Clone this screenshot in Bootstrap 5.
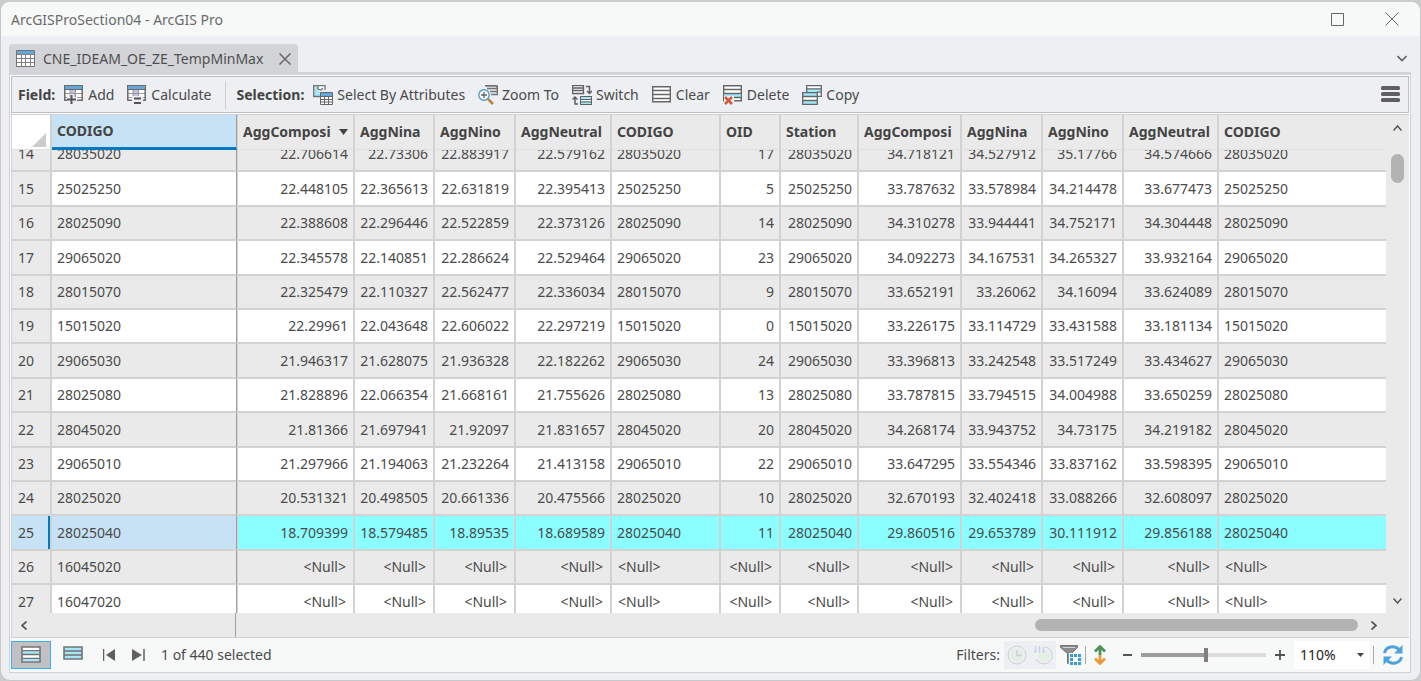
<!DOCTYPE html>
<html lang="en">
<head>
<meta charset="utf-8">
<meta name="viewport" content="width=device-width, initial-scale=1">
<title>ArcGISProSection04 - ArcGIS Pro</title>
<link rel="stylesheet" href="https://cdn.jsdelivr.net/npm/bootstrap@5.3.0/dist/css/bootstrap.min.css">
<style>
:root{--ink:#4a4a4a;--line:#cbcbcb;--chrome:#eeeff2;--pale:#f7f9f8;--gray:#eaeaea}
body{background:#cbcccc;color:var(--ink);font:14px/20px "Noto Sans","Open Sans",sans-serif;padding-top:2px}
.win{height:calc(100vh - 2px);background:var(--chrome);border:1px solid #c6c7c9;border-top:0;border-radius:9px 9px 10px 10px;overflow:hidden}
.title-bar{height:34px;background:var(--pale);padding:0 21px 0 10px;color:#6b6b6b}
.title-text{padding-top:2px}
.title-bar,.tab-strip,.tool-bar,.h-scroll,.v-scroll,.status-bar{flex-shrink:0}
.title-bar svg,.plain-btn svg{display:block}
.caption-btns{gap:41px}
.plain-btn{border:0;background:none;padding:0;color:inherit;white-space:nowrap;display:flex;align-items:center;gap:4px;line-height:20px}
.tab-strip{padding:8px 13px 0 8px;height:36px}
.doc-tab{background:#d3d4d8;border-radius:3px 3px 0 0;height:28px;padding:1px 7px 0;gap:8px;color:#4f4f4f}
.panel{margin:0 9px 7px 8px;border:1px solid #cfd0d3;border-top:3px solid #d3d4d8;background:#fff;min-height:0}
.tool-bar{margin:1px;height:37px;border:1px solid #bcbdc1;background:var(--chrome);padding:0 8px 0 6px}
.tools{gap:13px}
.tool-set{gap:9px}
.tools strong{color:#444}
.tool-sep{width:1px;height:28px;background:#cdced2;margin:0 -3px 0 1px}
.grid-zone{margin:0 1px;border:1px solid #d0d0d0;border-right:0;background:var(--gray);min-height:0}
.grid-view{overflow:hidden;min-height:0;min-width:0;height:100%}
.attr{border-collapse:separate;border-spacing:0;table-layout:fixed;width:100%}
.attr th,.attr td{padding:0 5px;border-right:2px solid #d2d2d2;border-bottom:2px solid #d2d2d2;white-space:nowrap;overflow:hidden;height:34px}
.attr tr>:last-child{border-right:0}
.attr tbody tr:nth-child(5n+2)>*,.attr tbody tr:nth-child(5n+4)>*{height:35px}
.attr thead th{position:sticky;top:0;height:35px;background:var(--gray);border-bottom:1px solid #e0e0e0;font-weight:700;color:#444}
.attr tbody th{background:var(--gray);font-weight:400;padding-left:6px}
.attr tbody tr:nth-child(even) td{background:#fff}
.attr tbody tr:nth-child(odd) td{background:var(--gray)}
.attr .n{text-align:right}
.attr .nil{padding:0 7px 0 6px}
.attr .pin{border-right-color:#a0a0a0;border-right-width:1px}
.attr .pin+*{border-left:1px solid #d2d2d2}
.attr thead .pin{background:#c8e2f5;border-bottom:3px solid #007ac2}
.attr thead .corner{background:#fff;padding:0}
.attr tbody tr.picked td{background:#8bffff}
.attr tbody tr.picked th,.attr tbody tr.picked .pin{background:#c8e2f5}
.attr tbody tr.picked th{box-shadow:inset -2px 0 #007ac2}
.v-scroll{width:23px;padding:10px 0 9px}
.v-thumb{width:13px;height:29px;border-radius:7px;background:#b3b3b3;margin-top:23px}
.h-scroll{height:24px}
.h-left{width:224px;border-right:1px solid #a0a0a0;padding-left:9px}
.h-right{gap:13px;padding-right:32px}
.h-thumb{width:323px;height:12px;border-radius:6px;background:#b3b3b3}
.status-bar{height:34px;background:var(--pale);padding:0 6px 0 1px}
.mode-btn{width:40px;height:28px;justify-content:center}
.mode-btn.on{background:#c0c1c5;border:1px solid #3daeee}
.off{background:var(--chrome);width:26px;height:28px;justify-content:center}
.bar-sep{width:1px;height:18px;background:#aaa}
.zoom-range{appearance:none;width:125px;height:14px;background:linear-gradient(90deg,#9c9c9c 52%,#dcdcdc 52%) center/100% 4px no-repeat}
.zoom-range::-webkit-slider-thumb{appearance:none;width:4px;height:14px;background:#808080}
.zoom-pick{width:75px;height:28px;border:0;background:#fff;color:#222;padding:0 0 0 6px;appearance:none;font-size:14px}
.caret-mark{right:5px;top:12px;pointer-events:none}
</style>
</head>
<body>
<svg width="0" height="0" class="position-absolute"><defs>
<g id="tbl"><path d="M.5 .5h18v16H.5z" fill="#fff" stroke="#737373"/><path d="M1 1h17v3H1z" fill="#62a9da"/><path d="M.5 4.500h18M1 8.500h17M1 12.500h17M5.500 5v12M9.500 5v12M14.500 5v12" stroke="#808080" fill="none"/></g>
<g id="fld"><path d="M.7 1h17.600v14H.7z" fill="#fff"/><path d="M6 5h5v8H6z" fill="#c9bfe0"/><path d="M1 8.500h17M1 12.500h17M6 5v10M11.500 5v10" stroke="#999" fill="none"/><path d="M.8 1v14.200h17.400V1" stroke="#6a6a6a" stroke-width="1.500" fill="none"/><path d="M0 0h19v5H0z" fill="#6a6a6a"/><path d="M1 1h17v3H1z" fill="#62a9da"/></g>
</defs></svg>
<main class="win d-flex flex-column">
<header class="title-bar d-flex align-items-center justify-content-between">
<span class="title-text">ArcGISProSection04 - ArcGIS Pro</span>
<div class="caption-btns d-flex align-items-center">
<button class="plain-btn" aria-label="Maximize"><svg width="13" height="13" fill="none" stroke="#666"><path d="M.5 .5h12v12H.5z"/></svg></button>
<button class="plain-btn" aria-label="Close"><svg width="14" height="14" stroke="#666"><path d="M.5 .5l13 13M13.500 .5l-13 13"/></svg></button>
</div></header>
<div class="tab-strip d-flex align-items-center justify-content-between">
<div class="doc-tab d-flex align-items-center"><svg width="19" height="17"><use href="#tbl"/></svg><span>CNE_IDEAM_OE_ZE_TempMinMax</span>
<button class="plain-btn ms-2" aria-label="Close tab"><svg width="12" height="12" stroke="#666" stroke-width="1.500"><path d="M.5 .5l11 11M11.500 .5l-11 11"/></svg></button></div>
<button class="plain-btn" aria-label="Views list"><svg width="10" height="7" fill="none" stroke="#666" stroke-width="1.700"><path d="M.5 1l4.500 4.500L9.500 1"/></svg></button>
</div>
<section class="panel d-flex flex-column flex-grow-1">
<div class="tool-bar d-flex align-items-center justify-content-between">
<div class="tools d-flex align-items-center">
<div class="tool-set d-flex align-items-center"><strong>Field:</strong>
<button class="plain-btn"><svg width="20" height="20"><use href="#fld"/><path d="M3 12h3V9h4v3h3v5h-3v3H5v-3H3z" fill="#eeeff2"/><path d="M7.500 10v9M3 14.500h9" stroke="#555" stroke-width="2"/></svg>Add</button></div>
<button class="plain-btn"><svg width="20" height="20"><use href="#fld"/><path d="M5 11h11v9H5z" fill="#eeeff2"/><path d="M7 13.500h7M7 18h7" stroke="#555" stroke-width="2"/></svg>Calculate</button>
<span class="tool-sep"></span>
<div class="tool-set d-flex align-items-center"><strong>Selection:</strong>
<button class="plain-btn"><svg width="20" height="20"><path d="M.7 .7h11.300v4H9L7 7v4.500H.7z" fill="#fff"/><path d="M1 1h4v3l2 3v4H1z" fill="#a5e6f8"/><path d="M7 11.500H.7V.7h11.300V5M5 1v3l3 1 2-2" fill="none" stroke="#737373" stroke-width="1.300"/><path d="M7.500 7.500h12v12h-12z" fill="#fff" stroke="#666"/><path d="M8 8h11v3H8z" fill="#62a9da"/><path d="M8 11.500h11M8 14.500h11M8 17h11M11.500 11v9M15.500 11v9" stroke="#666"/></svg>Select By Attributes</button></div>
<button class="plain-btn"><svg width="20" height="20" fill="none"><path d="M7 .7h12M19.300 .5v9.500M8 1h11v2.500M9 3.500h10M12 6.500h7M13 9.500h7" stroke="#737373" stroke-width="1.400"/><circle cx="6" cy="10" r="5.200" stroke="#4c9ccd" stroke-width="1.400" fill="#f5fbff"/><path d="M6 7v6M3 10h6" stroke="#666" stroke-width="1.300"/><path d="M10 14l5 5" stroke="#b9843f" stroke-width="2.500"/></svg>Zoom To</button>
<button class="plain-btn"><svg width="20" height="20" fill="none" stroke="#606060"><path d="M.5 .5h11v8H.5z" fill="#fff"/><path d="M.5 .5h11v8H.5zM.5 3h11M.5 5.500h11" stroke-width="1.300"/><path d="M8.500 11.500h11v8h-11z" fill="#fff"/><path d="M9 12h10v2H9zM9 16h10v3H9z" fill="#a5e6f8" stroke="none"/><path d="M8.500 11.500h11v8h-11zM8.500 14.500h11M8.500 17h11"/><path d="M14 1.500h3.500v7M15 6l2.500 2.500L20 6M6 19H3v-7M.5 14.500L3 12l2.500 2.500" stroke-width="1.500"/></svg>Switch</button>
<button class="plain-btn"><svg width="20" height="20"><path d="M.7 1.700h17.600v15H.7z" fill="#fff" stroke="#666" stroke-width="1.400"/><path d="M1 5.500h17M1 9.500h17M1 13.500h17" stroke="#666" stroke-width="1.300"/></svg>Clear</button>
<button class="plain-btn"><svg width="20" height="20"><path d="M.7 .7h17.600v15H.7z" fill="#fff" stroke="#666" stroke-width="1.400"/><path d="M1 9h17v3H1z" fill="#a5e6f8"/><path d="M1 4.500h17M1 8.500h17M1 12.500h17" stroke="#666" stroke-width="1.300"/><path d="M1 11h10v9H1z" fill="#eeeff2"/><path d="M2 12l7 7M9 12l-7 7" stroke="#cf5c3c" stroke-width="2.600"/></svg>Delete</button>
<button class="plain-btn"><svg width="20" height="20"><path d="M4.500 .5h15v11h-15z" fill="#fff"/><path d="M5 4h14v3H5z" fill="#a5e6f8"/><path d="M4.700 7V.7h14.600v10.600H16M5 3.800h14M15 7.200h4" fill="none" stroke="#666" stroke-width="1.300"/><path d="M.7 7.700h14.600v11.600H.7z" fill="#a5e6f8"/><path d="M1 12h14v3H1z" fill="#fff"/><path d="M.7 7.700h14.600v11.600H.7zM1 11.500h14M1 15.500h14" fill="none" stroke="#666" stroke-width="1.300"/></svg>Copy</button>
</div>
<button class="plain-btn" aria-label="Menu"><svg width="19" height="18" fill="#606060"><rect width="19" height="4" rx="1.500"/><rect y="6" width="19" height="4" rx="1.500"/><rect y="12" width="19" height="4" rx="1.500"/></svg></button>
</div>
<div class="grid-zone d-flex flex-column flex-grow-1">
<div class="d-flex flex-grow-1" style="min-height:0">
<div class="grid-view flex-grow-1" id="view"><table class="attr"><colgroup id="cols"></colgroup><thead><tr id="head"></tr></thead><tbody id="rows"></tbody></table></div>
<div class="v-scroll d-flex flex-column align-items-center justify-content-between">
<div class="d-flex flex-column align-items-center"><button class="plain-btn" aria-label="Scroll up"><svg width="9" height="6" fill="none" stroke="#555" stroke-width="1.500"><path d="M.5 5.500l4-4.500 4 4.500"/></svg></button><div class="v-thumb"></div></div>
<button class="plain-btn" aria-label="Scroll down"><svg width="9" height="6" fill="none" stroke="#555" stroke-width="1.500"><path d="M.5 .5l4 4.500 4-4.500"/></svg></button>
</div></div>
<div class="h-scroll d-flex">
<div class="h-left d-flex align-items-center"><button class="plain-btn" aria-label="Scroll left"><svg width="6" height="9" fill="none" stroke="#555" stroke-width="1.700"><path d="M5.500 .5l-4.500 4 4.500 4"/></svg></button></div>
<div class="h-right flex-grow-1 d-flex align-items-center justify-content-end"><div class="h-thumb"></div><button class="plain-btn" aria-label="Scroll right"><svg width="6" height="9" fill="none" stroke="#555" stroke-width="1.700"><path d="M.5 .5l4.500 4-4.500 4"/></svg></button></div>
</div></div>
<footer class="status-bar d-flex align-items-center justify-content-between">
<div class="d-flex align-items-center">
<button class="plain-btn mode-btn on" aria-label="Show all records"><svg width="20" height="18"><path d="M1 1h18v15H1z" fill="#fff" stroke="#737373" stroke-width="1.600"/><path d="M2 5h16v3H2zM2 13h16v2H2z" fill="#a5e6f8"/><path d="M1 4.700h18M1 8.500h18M1 12.300h18" stroke="#737373" stroke-width="1.300"/></svg></button>
<button class="plain-btn ms-2 me-3 ps-1" aria-label="Show selected records"><svg width="20" height="18"><path d="M1 1h18v12H1z" fill="#a5e6f8" stroke="#737373" stroke-width="1.600"/><path d="M1 5h18M1 9h18" stroke="#737373" stroke-width="1.500"/></svg></button>
<button class="plain-btn ms-1 me-3" aria-label="First record"><svg width="13" height="12"><path d="M.5 0v12" stroke="#606060" stroke-width="1.500"/><path d="M12 0v12L3 6z" fill="#606060"/></svg></button>
<button class="plain-btn me-3" aria-label="Last record"><svg width="13" height="12"><path d="M12 0v12" stroke="#606060" stroke-width="1.500"/><path d="M0 0v12l10-6z" fill="#606060"/></svg></button>
<span>1 of 440 selected</span></div>
<div class="d-flex align-items-center"><span class="me-1">Filters:</span>
<button class="plain-btn off" disabled aria-label="Time filter"><svg width="20" height="20" fill="none" stroke="#c9cfd2"><circle cx="10" cy="10" r="9"/><circle cx="10" cy="10" r="6.500" fill="#e3eee7" stroke="none"/><path d="M10 5v5.500h5" stroke-width="1.500"/></svg></button>
<button class="plain-btn off" disabled aria-label="Range filter"><svg width="20" height="20" fill="none" stroke="#c9cfd2"><path d="M12 2a8.500 8.500 0 1 1-9 12"/><circle cx="11" cy="11" r="6" fill="#e3eee7" stroke="none"/><path d="M2.500 1v7M6.500 1v7M10.500 1v7M1 6h3M5 3h3M9 6h3" stroke="#bcd5e4"/></svg></button>
<button class="plain-btn ps-1" aria-label="Selection filter"><svg width="21" height="20"><path d="M.5 .5h17v2l-6 6v8l-4 2V8.500l-7-6z" fill="#8c8c8c" stroke="#777"/><path d="M3 2.500h12" stroke="#d5d5d5"/><path d="M9 8h12v12H9z" fill="#f7f9f8"/><path d="M10 9h3v3h-3zM14 9h3v3h-3zM18 9h3v3h-3zM10 13h3v3h-3zM18 13h3v3h-3zM10 17h3v3h-3zM14 17h3v3h-3zM18 17h3v3h-3z" fill="#3c9bdc"/></svg></button>
<span class="bar-sep ms-1 me-2"></span>
<button class="plain-btn" aria-label="Extent filter"><svg width="12" height="20" fill="none" stroke-width="2.800"><path d="M6 10V2M1 6.500l5-5 5 5" stroke="#4e9458"/><path d="M6 10v8M1 13.500l5 5 5-5" stroke="#eb9a3e"/></svg></button>
<button class="plain-btn ms-3 me-2" aria-label="Zoom out"><svg width="11" height="10"><path d="M1 5h9" stroke="#555" stroke-width="2"/></svg></button>
<input type="range" class="zoom-range" min="0" max="100" value="52" aria-label="Table zoom">
<button class="plain-btn mx-2" aria-label="Zoom in"><svg width="12" height="10"><path d="M1 5h10M6 0v10" stroke="#555" stroke-width="1.800"/></svg></button>
<div class="position-relative"><select class="zoom-pick d-block" aria-label="Zoom level"><option>110%</option></select><svg class="caret-mark position-absolute" width="7" height="5"><path d="M0 0h7L3.500 4z" fill="#444"/></svg></div>
<span class="bar-sep ms-1 me-2"></span>
<button class="plain-btn" aria-label="Refresh"><svg width="22" height="20" viewBox="-1 0 22 20" fill="none" stroke="#4fa3dd" stroke-width="3"><path d="M1.500 8C3 1 12 0 16.500 5M18.500 12C17 19 8 20 3.500 15"/><path d="M19.500 0v8.500H11zM.5 20v-8.500H9z" fill="#4fa3dd" stroke="none"/></svg></button>
</div></footer>
</section>
</main>
<script>
const widths=[40,185,118,80,81,96,109,60,78,103,81,81,95,null];
const heads=['','CODIGO','AggComposi','AggNina','AggNino','AggNeutral','CODIGO','OID','Station','AggComposi','AggNina','AggNino','AggNeutral','CODIGO'];
const data=`28035020 22.706614 22.73306 22.883917 22.579162 17 34.718121 34.527912 35.17766 34.574666
25025250 22.448105 22.365613 22.631819 22.395413 5 33.787632 33.578984 34.214478 33.677473
28025090 22.388608 22.296446 22.522859 22.373126 14 34.310278 33.944441 34.752171 34.304448
29065020 22.345578 22.140851 22.286624 22.529464 23 34.092273 34.167531 34.265327 33.932164
28015070 22.325479 22.110327 22.562477 22.336034 9 33.652191 33.26062 34.16094 33.624089
15015020 22.29961 22.043648 22.606022 22.297219 0 33.226175 33.114729 33.431588 33.181134
29065030 21.946317 21.628075 21.936328 22.182262 24 33.396813 33.242548 33.517249 33.434627
28025080 21.828896 22.066354 21.668161 21.755626 13 33.787815 33.794515 34.004988 33.650259
28045020 21.81366 21.697941 21.92097 21.831657 20 34.268174 33.943752 34.73175 34.219182
29065010 21.297966 21.194063 21.232264 21.413158 22 33.647295 33.554346 33.837162 33.598395
28025020 20.531321 20.498505 20.661336 20.475566 10 32.670193 32.402418 33.088266 32.608097
28025040 18.709399 18.579485 18.89535 18.689589 11 29.860516 29.653789 30.111912 29.856188
16045020
16047020`.split('\n');
const $=id=>document.getElementById(id);
$('cols').innerHTML=widths.map(w=>w?`<col style="width:${w}px">`:'<col>').join('');
$('head').innerHTML=heads.map((h,i)=>`<th scope="col" class="${i==0?'corner':i==1?'pin':''}">${i==0?'<svg class="d-block ms-auto me-1 mt-3" width="14" height="14"><path d="M14 0v14H0z" fill="#cbcbcb"/></svg>':h}${i==2?'<svg class="ms-2" width="9" height="8"><path d="M0 0h9L4.500 6z" fill="#444"/></svg>':''}</th>`).join('');
$('rows').innerHTML=data.map((line,r)=>{
  const v=line.split(' '),k=v[0],full=v.length>1;
  const cells=full?[v[1],v[2],v[3],v[4],k,v[5],k,v[6],v[7],v[8],v[9],k]:Array(12).fill('&lt;Null&gt;');
  return `<tr class="${k=='28025040'?'picked':''}"><th scope="row">${14+r}</th><td class="pin">${k}</td>`+cells.map((c,i)=>`<td class="${i==4||i==11?'':'n'}${full?'':' nil'}">${c}</td>`).join('')+'</tr>';
}).join('');
$('view').scrollTop=12;
</script>
<script src="https://cdn.jsdelivr.net/npm/bootstrap@5.3.0/dist/js/bootstrap.bundle.min.js"></script>
</body>
</html>
